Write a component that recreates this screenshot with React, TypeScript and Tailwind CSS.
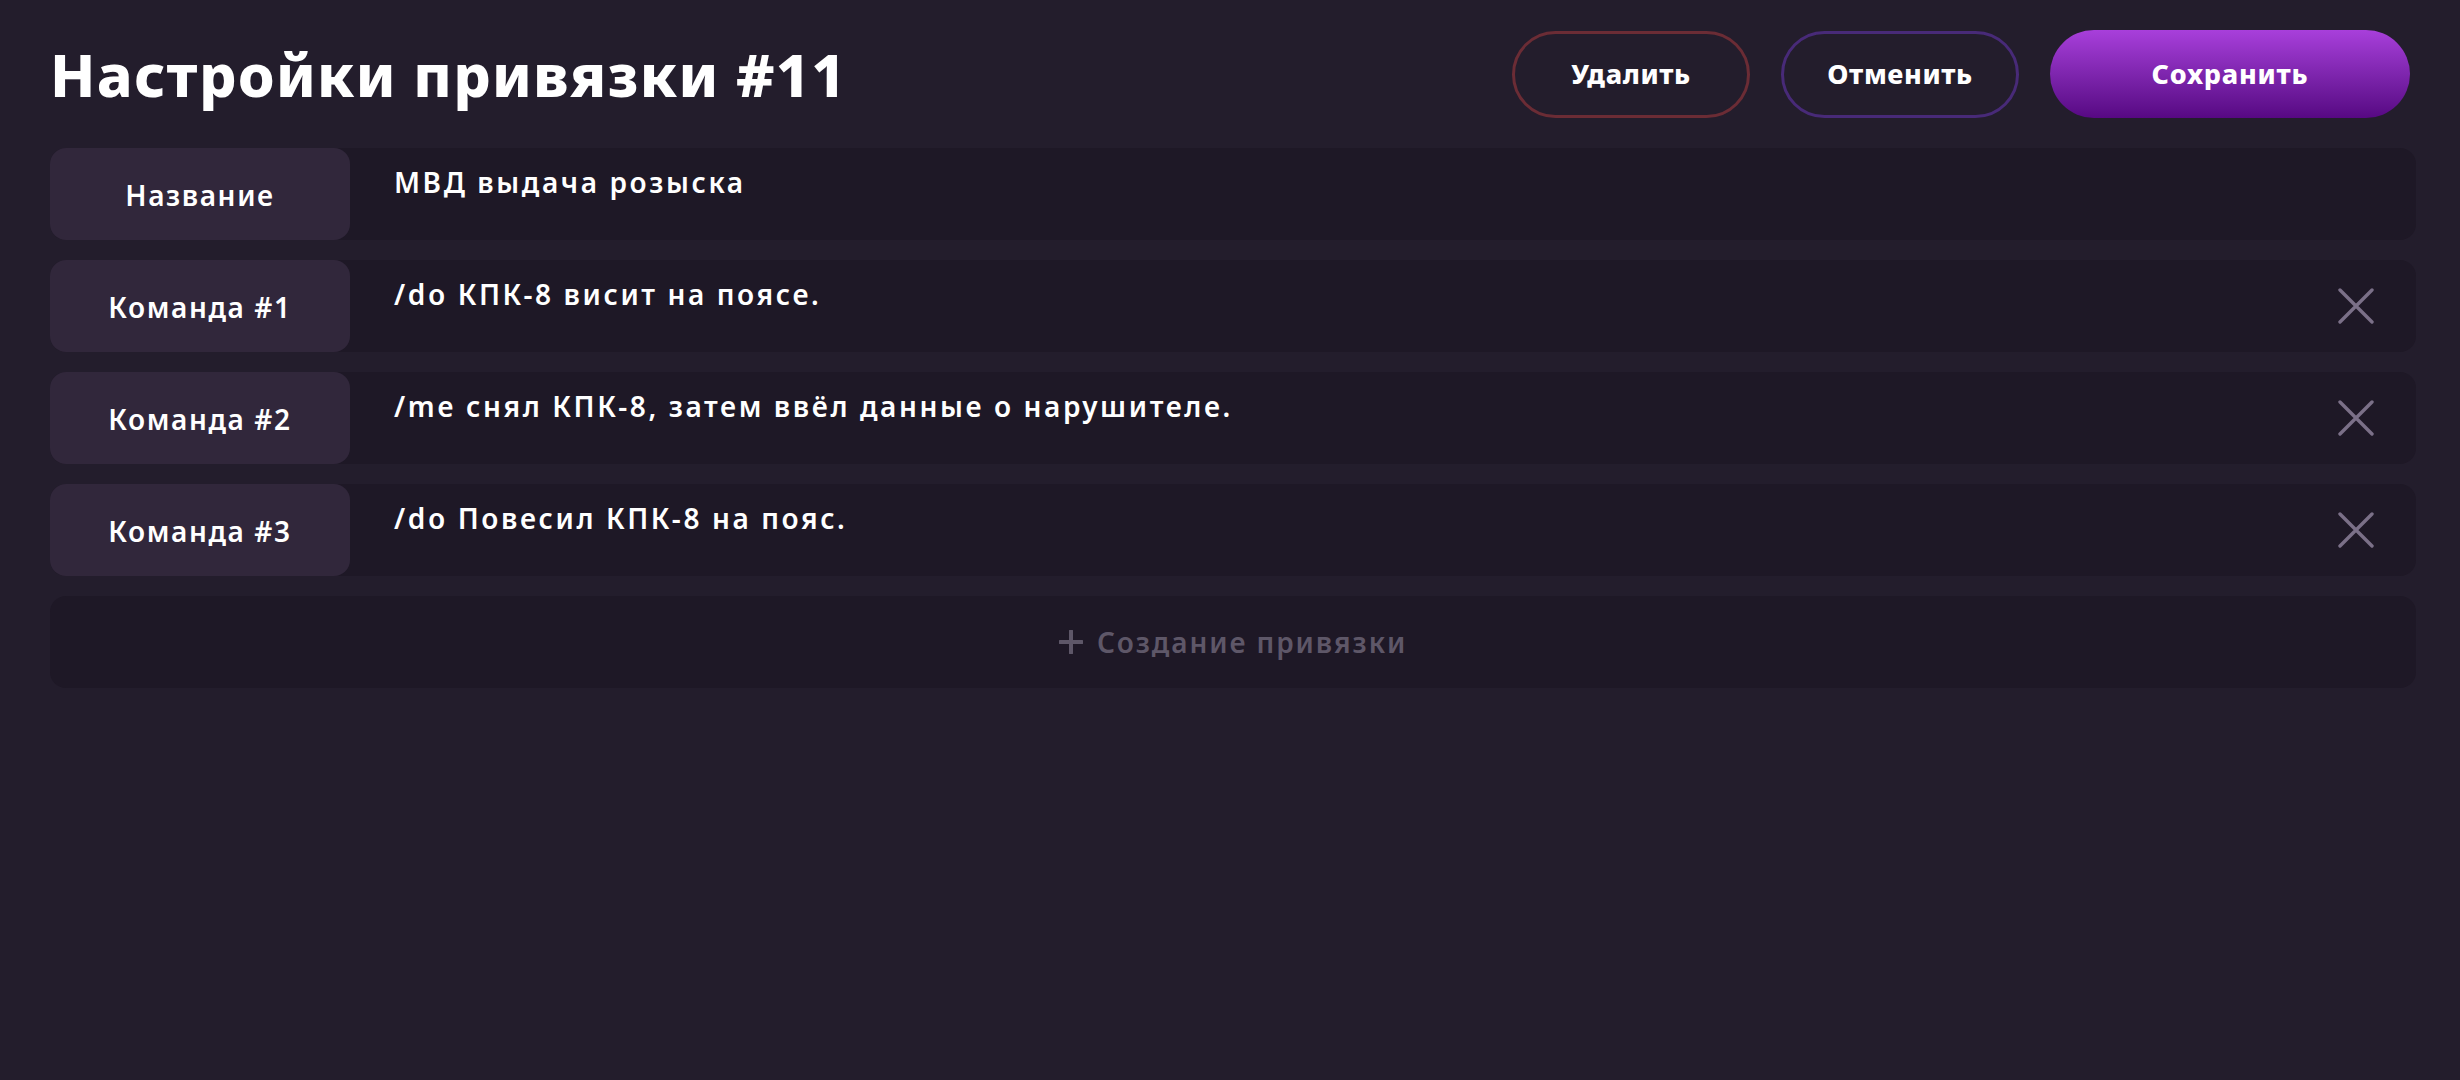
const rows = [
  { label: "Название", value: "МВД выдача розыска", removable: false },
  { label: "Команда #1", value: "/do КПК-8 висит на поясе.", removable: true },
  { label: "Команда #2", value: "/me снял КПК-8, затем ввёл данные о нарушителе.", removable: true },
  { label: "Команда #3", value: "/do Повесил КПК-8 на пояс.", removable: true },
];

function CrossIcon() {
  return (
    <svg width="36" height="36" viewBox="0 0 36 36" fill="none">
      <path d="M2 2L34 34M34 2L2 34" stroke="currentColor" strokeWidth="3.4" strokeLinecap="round" />
    </svg>
  );
}

function PlusIcon() {
  return (
    <svg width="24" height="24" viewBox="0 0 24 24" fill="none">
      <path d="M12 1V23M1 12H23" stroke="currentColor" strokeWidth="4" strokeLinecap="round" />
    </svg>
  );
}

function Header() {
  return (
    <div className="flex items-center justify-between pt-[30px] pr-[6px]">
      <h1 className="text-[59px] font-extrabold leading-none tracking-[1.3px] text-white">Настройки привязки #11</h1>
      <div className="flex items-center gap-[31px]">
        <button className="h-[87px] w-[238px] rounded-full border-[3px] border-[#6b2c35] text-[27px] font-extrabold tracking-[0.6px] text-white">
          Удалить
        </button>
        <button className="h-[87px] w-[238px] rounded-full border-[3px] border-[#482a78] text-[27px] font-extrabold tracking-[0.6px] text-white">
          Отменить
        </button>
        <button className="h-[88px] w-[360px] rounded-full bg-gradient-to-b from-[#a83fdb] to-[#570883] text-[27px] font-extrabold tracking-[0.8px] text-white">
          Сохранить
        </button>
      </div>
    </div>
  );
}

function Row({ label, value, removable }: { label: string; value: string; removable: boolean }) {
  return (
    <div className="flex h-[92px] rounded-[16px] bg-[#1e1826]">
      <div className="flex w-[300px] shrink-0 items-center justify-center rounded-[16px] bg-[#31273b] pt-[2px] text-[28px] font-semibold tracking-[1.6px] text-white">
        {label}
      </div>
      <div className="flex-1 pl-[44px] pt-[18px] text-[28px] font-semibold leading-[32px] tracking-[2.6px] text-white">{value}</div>
      {removable && (
        <button className="flex w-[120px] items-center justify-center text-[#7b7088]">
          <CrossIcon />
        </button>
      )}
    </div>
  );
}

export default function App() {
  return (
    <div className="min-h-screen bg-[#231d2c] pl-[50px] pr-[44px] text-white antialiased" style={{ fontFamily: '"Noto Sans", sans-serif' }}>
      <Header />
      <div className="mt-[30px] flex flex-col gap-[20px]">
        {rows.map((r) => (
          <Row key={r.label} {...r} />
        ))}
        <button className="flex h-[92px] items-center justify-center gap-[14px] rounded-[16px] bg-[#1e1826] text-[28px] font-semibold tracking-[1.9px] text-[#5e5768]">
          <PlusIcon />
          Создание привязки
        </button>
      </div>
    </div>
  );
}
